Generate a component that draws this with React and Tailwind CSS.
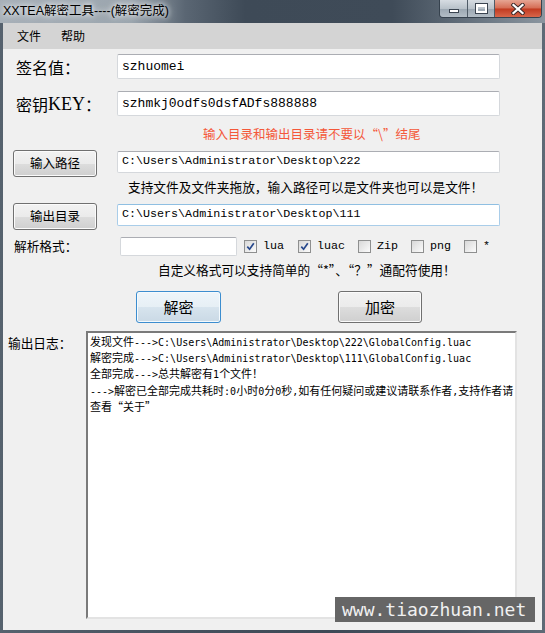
import React from "react";

const isAscii = (s) => /^[\x00-\x7f]+$/.test(s);

// 把ASCII部分单独包一层，模拟宋体半角宽度
const Mix = ({ text, latin }) =>
  text.split(/([\x00-\x7f]+)/).map((s, i) =>
    s === "" ? null : isAscii(s) ? (
      <span key={i} className={latin}>
        {s}
      </span>
    ) : (
      <span key={i}>{s}</span>
    )
  );

const Field = ({ value, className, blue }) => (
  <div
    className={`flex items-center bg-white border rounded-[2px] px-[4px] font-['Liberation_Mono',monospace] whitespace-nowrap ${
      blue
        ? "border-[#a9cde9] border-t-[#8fbfe2]"
        : "border-[#d5d8dc] border-t-[#abadb3]"
    } ${className}`}
  >
    {value}
  </div>
);

const Btn = ({ children, className, focus }) => (
  <div
    className={`flex items-center justify-center border rounded-[3px] ${
      focus
        ? "border-[#3c8dcf] bg-[linear-gradient(#eef5fa_0%,#e6eff5_50%,#d7e4ee_50%,#cad9e5_100%)] shadow-[inset_0_0_0_1px_#f4fafe]"
        : "border-[#707070] bg-[linear-gradient(#f2f2f2_0%,#ebebeb_50%,#dddddd_50%,#cfcfcf_100%)] shadow-[inset_0_0_0_1px_#fbfbfb]"
    } ${className}`}
  >
    {children}
  </div>
);

const Check = ({ checked, label, className }) => (
  <div className={`flex items-center ${className}`}>
    <div className="w-[13px] h-[13px] border border-[#8e8f8f] bg-[linear-gradient(135deg,#d8d8d8,#fbfbfb)] flex items-center justify-center">
      {checked && (
        <svg width="9" height="9" viewBox="0 0 9 9">
          <path d="M1.3 4.6 L3.6 7.2 L7.8 1.2" fill="none" stroke="#27488c" strokeWidth="1.7" />
        </svg>
      )}
    </div>
    <span className="ml-[6px] text-[11.7px] font-['Liberation_Mono',monospace]">{label}</span>
  </div>
);

const log = [
  "发现文件--->C:\\Users\\Administrator\\Desktop\\222\\GlobalConfig.luac",
  "解密完成--->C:\\Users\\Administrator\\Desktop\\111\\GlobalConfig.luac",
  "全部完成--->总共解密有1个文件！",
  "--->解密已全部完成共耗时:0小时0分0秒,如有任何疑问或建议请联系作者,支持作者请",
  "查看“关于”",
];

export default function App() {
  return (
    <div className="relative w-[545px] h-[633px] overflow-hidden flex flex-col bg-[linear-gradient(90deg,#56626e_0%,#46525f_30%,#3d4956_60%,#4a5663_85%,#5e6a76_100%)] font-['Noto_Sans_CJK_SC',sans-serif] text-black">
      {/* 标题栏 */}
      <div className="h-[23px] flex items-start bg-[linear-gradient(90deg,#a7b0b8_0%,#9ba5ae_24%,#5a6673_34%,#3e4a57_45%,#3f4b58_72%,#6a7682_88%,#8a959f_100%)]">
        <div className="pl-[3px] pt-[3px] text-[12.5px] leading-[16px] font-['Liberation_Sans','Noto_Sans_CJK_SC',sans-serif] [text-shadow:0_0_5px_#ffffff,0_0_9px_#eef2f5]">
          XXTEA解密工具----(解密完成)
        </div>
        <div className="ml-auto mr-[3px] flex h-[18px] border border-t-0 border-[#36424e] rounded-b-[4px] overflow-hidden">
          <div className="w-[28px] flex items-end justify-center pb-[4px] bg-[linear-gradient(#d6dce2_0%,#b9c2ca_50%,#9aa6b1_51%,#b3bdc6_100%)] border-r border-[#4f5b67]">
            <div className="w-[10px] h-[4px] bg-white border border-[#3a4450]" />
          </div>
          <div className="w-[27px] flex items-center justify-center bg-[linear-gradient(#d6dce2_0%,#b9c2ca_50%,#9aa6b1_51%,#b3bdc6_100%)] border-r border-[#4f5b67]">
            <div className="w-[11px] h-[9px] border-[2px] border-t-[3px] border-white outline outline-1 outline-[#3a4450]" />
          </div>
          <div className="w-[46px] flex items-center justify-center bg-[linear-gradient(#e6a593_0%,#d56c54_48%,#c13a20_52%,#d8664a_100%)]">
            <svg width="14" height="12" viewBox="0 0 14 12">
              <path d="M2.5 2 L11.5 10 M11.5 2 L2.5 10" stroke="#3b2a2a" strokeWidth="4.2" strokeLinecap="square" />
              <path d="M2.5 2 L11.5 10 M11.5 2 L2.5 10" stroke="#ffffff" strokeWidth="2.3" strokeLinecap="square" />
            </svg>
          </div>
        </div>
      </div>

      {/* 客户区 */}
      <div className="flex-1 mx-[3px] mb-[3px] bg-[#f0f0f0] flex flex-col">
        <div className="h-[26px] bg-[#d4d4d4] flex items-center pl-[14px] text-[12px] leading-none">
          <span>文件</span>
          <span className="ml-[20px]">帮助</span>
        </div>

        <div className="mt-[5px] flex items-center h-[25px]">
          <div className="w-[114px] pl-[13px] text-[16px] leading-none">签名值：</div>
          <Field className="w-[383px] h-[25px] text-[13px]" value="szhuomei" />
        </div>

        <div className="mt-[12px] flex items-center h-[25px]">
          <div className="w-[114px] pl-[13px] text-[16px] leading-none flex items-center">
            <span>密钥</span>
            <span className="font-['Liberation_Serif',serif] text-[18px]">KEY</span>
            <span>：</span>
          </div>
          <Field className="w-[383px] h-[25px] text-[13px]" value="szhmkj0odfs0dsfADfs888888" />
        </div>

        <div className="mt-[10px] h-[16px] pl-[200px] text-[12.5px] leading-[16px] text-[#f4583a] whitespace-nowrap">
          输入目录和输出目录请不要以“\”结尾
        </div>

        <div className="mt-[8px] flex items-start h-[27px]">
          <Btn className="ml-[10px] w-[84px] h-[27px] text-[12.5px]">输入路径</Btn>
          <Field className="ml-[20px] mt-[1px] w-[383px] h-[22px] text-[11.7px]" value="C:\Users\Administrator\Desktop\222" />
        </div>

        <div className="mt-[2px] h-[16px] pl-[125px] text-[12.7px] leading-[16px] whitespace-nowrap">
          支持文件及文件夹拖放，输入路径可以是文件夹也可以是文件！
        </div>

        <div className="mt-[8px] flex items-start h-[27px]">
          <Btn className="ml-[10px] w-[84px] h-[27px] text-[12.5px]">输出目录</Btn>
          <Field blue className="ml-[20px] mt-[1px] w-[383px] h-[22px] text-[11.7px]" value="C:\Users\Administrator\Desktop\111" />
        </div>

        <div className="mt-[7px] flex items-center h-[19px]">
          <div className="w-[117px] pl-[11px] text-[12.7px] leading-none">解析格式：</div>
          <Field className="w-[117px] h-[19px]" value="" />
          <Check checked label="lua" className="ml-[7px] w-[54px]" />
          <Check checked label="luac" className="w-[60px]" />
          <Check label="Zip" className="w-[53px]" />
          <Check label="png" className="w-[53px]" />
          <Check label="*" />
        </div>

        <div className="mt-[6px] h-[16px] pl-[155px] text-[12.7px] leading-[16px] whitespace-nowrap">
          自定义格式可以支持简单的“*”、“？”通配符使用！
        </div>

        <div className="mt-[13px] flex h-[32px]">
          <Btn focus className="ml-[133px] w-[85px] h-[32px] text-[15px]">解密</Btn>
          <Btn className="ml-[117px] w-[84px] h-[32px] text-[15px]">加密</Btn>
        </div>

        <div className="mt-[8px] flex items-start">
          <div className="w-[83px] pl-[5px] pt-[4px] text-[12.7px] leading-[16px]">输出日志：</div>
          <div className="w-[431px] h-[288px] bg-white border-2 border-t-[#7a7a7a] border-l-[#7a7a7a] border-r-[#e3e3e3] border-b-[#e3e3e3] pl-[2px] pt-[1px] text-[11px] leading-[15.2px]">
            {log.map((line, i) => (
              <div key={i} className="whitespace-nowrap">
                <Mix text={line} latin="font-['DejaVu_Sans_Mono',monospace] text-[10px]" />
              </div>
            ))}
          </div>
        </div>
      </div>

      {/* 水印 */}
      <div className="absolute left-[335px] top-[597px] w-[200px] h-[25px] bg-[#666666] flex items-center pl-[7px] text-[18px] text-[#f0f0f0] font-['DejaVu_Sans_Mono',monospace] leading-none">
        www.tiaozhuan.net
      </div>
    </div>
  );
}
